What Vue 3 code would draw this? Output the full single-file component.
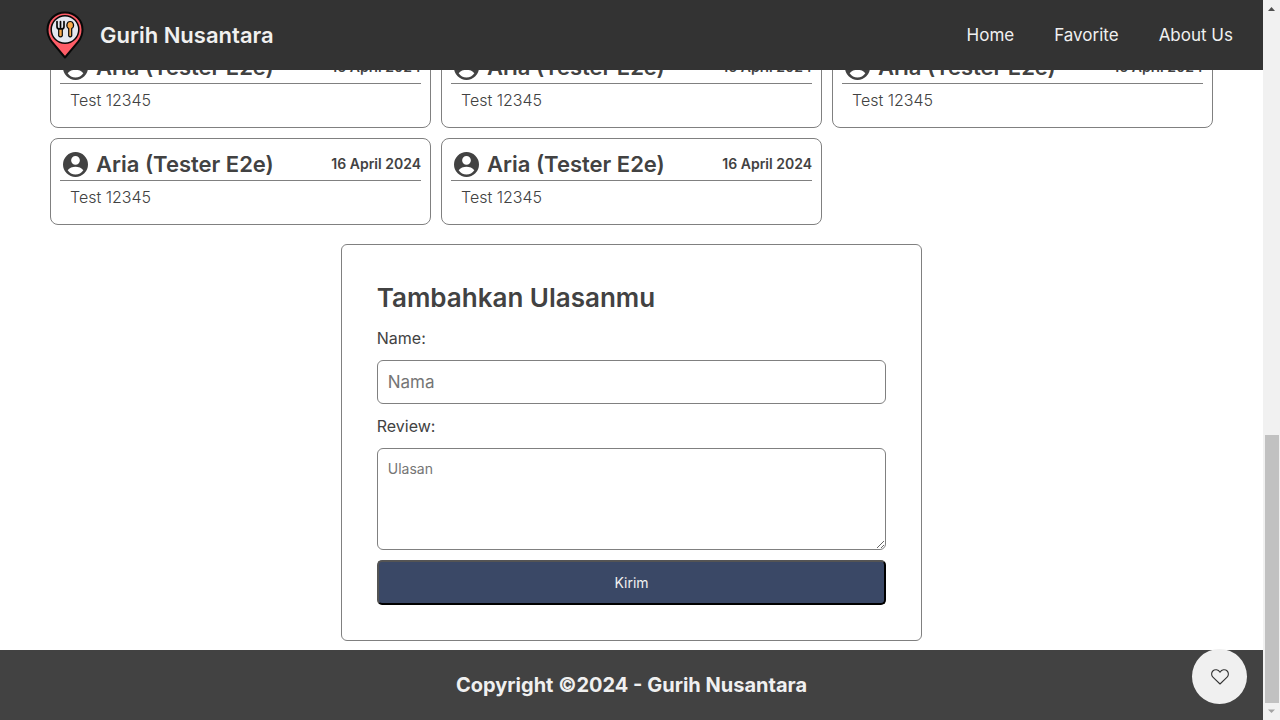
<script setup>
import { ref } from 'vue'

const links = ['Home', 'Favorite', 'About Us']
const reviews = Array.from({ length: 5 }, (_, id) => ({
  id,
  name: 'Aria (Tester E2e)',
  date: '16 April 2024',
  text: 'Test 12345',
}))
const name = ref('')
const review = ref('')
</script>

<template>
  <div class="window">
    <div class="page">
      <header class="topbar">
        <a class="brand" href="#">
          <svg class="logo" viewBox="0 0 40 48" aria-hidden="true">
            <path d="M20 1.500C10 1.500 2.500 9.200 2.500 18.700c0 5 1.800 8.900 4.600 12.500L20 46.500l12.900-15.300c2.800-3.600 4.600-7.500 4.600-12.500C37.500 9.200 30 1.500 20 1.500z" fill="#ff5d67" stroke="#080808" stroke-width="2" stroke-linejoin="round" />
            <circle cx="20" cy="18.500" r="13.800" fill="#e4e7ef" stroke="#080808" stroke-width="1.500" />
            <path d="M13.700 17.500h3.600v7.300q-1.800 2-3.600 0z" fill="#f8a94b" stroke="#080808" stroke-width="1.200" stroke-linejoin="round" />
            <path d="M12 10.500v5q0 2.500 2.500 2.500h2q2.500 0 2.500-2.500v-5M15.500 10.500v7" fill="none" stroke="#080808" stroke-width="1.700" stroke-linecap="round" />
            <path d="M23.700 17.500v7.300q1.500 2 3 0v-7.300c3-1.500 2.200-7-1.500-7s-4.500 5.500-1.500 7z" fill="#f8a94b" stroke="#080808" stroke-width="1.200" stroke-linejoin="round" />
          </svg>
          <span>Gurih Nusantara</span>
        </a>
        <nav class="links">
          <a v-for="link in links" :key="link" href="#">{{ link }}</a>
        </nav>
      </header>

      <main class="content">
        <section class="reviews">
          <article v-for="item in reviews" :key="item.id" class="review">
            <div class="review-head">
              <svg class="avatar" viewBox="0 0 24 24" aria-hidden="true">
                <path fill="currentColor" fill-rule="evenodd" d="M12 0a12 12 0 1 0 0 24a12 12 0 1 0 0-24zM12 3.800a4.200 4.200 0 1 1 0 8.400a4.200 4.200 0 1 1 0-8.400zM12 21.600c-3 0-5.900-1.500-7.500-4.200c1.500-2.200 4.700-3.300 7.500-3.300s6 1.100 7.500 3.300c-1.600 2.700-4.500 4.200-7.500 4.200z" />
              </svg>
              <h3>{{ item.name }}</h3>
              <span class="date">{{ item.date }}</span>
            </div>
            <p>{{ item.text }}</p>
          </article>
        </section>

        <form class="form" @submit.prevent>
          <h2>Tambahkan Ulasanmu</h2>
          <label for="name">Name:</label>
          <input id="name" v-model="name" type="text" placeholder="Nama" />
          <label for="review">Review:</label>
          <textarea id="review" v-model="review" placeholder="Ulasan"></textarea>
          <button type="submit">Kirim</button>
        </form>
      </main>

      <footer class="footer">Copyright ©2024 - Gurih Nusantara</footer>

      <button class="like" type="button" aria-label="Favorite">
        <svg viewBox="0 0 18 16" aria-hidden="true">
          <path d="M9 15L1.900 8.200C.2 6.500.2 3.600 1.800 2C3.800 0 7.300.4 9 3.200C10.700.4 14.200 0 16.200 2c1.600 1.600 1.600 4.500-.1 6.200z" fill="none" stroke="currentColor" stroke-width="1.100" stroke-linejoin="round" />
        </svg>
      </button>
    </div>

    <div class="scrollbar" aria-hidden="true">
      <svg class="arrow" viewBox="0 0 17 17"><path d="M5 11L8.500 7L12 11z" fill="#505050" /></svg>
      <div class="thumb"></div>
      <svg class="arrow" viewBox="0 0 17 17"><path d="M5 6.500h7L8.500 10z" fill="#a3a3a3" /></svg>
    </div>
  </div>
</template>

<style>
body {
  margin: 0;
}
</style>

<style scoped>
.window {
  display: flex;
  height: 100vh;
  overflow: hidden;
  font-family: Inter, "Open Sans", sans-serif;
  font-size: 16px;
  line-height: 24px;
  color: #424242;
  background: #fff;
}
.window *,
.window *::before {
  box-sizing: border-box;
}
.page {
  position: relative;
  display: flex;
  flex: 1;
  flex-direction: column;
  min-width: 0;
}
.topbar {
  position: sticky;
  top: 0;
  z-index: 2;
  display: flex;
  flex-shrink: 0;
  align-items: center;
  justify-content: space-between;
  height: 70px;
  margin-bottom: -29px;
  padding: 0 30px 0 45px;
  background: #333;
}
.brand {
  display: flex;
  align-items: center;
  gap: 15px;
  color: #f0f0f0;
  font-size: 22px;
  font-weight: 600;
  text-decoration: none;
}
.logo {
  width: 40px;
  height: 48px;
}
.links {
  display: flex;
  gap: 40px;
  font-size: 17px;
}
.links a {
  color: #f0f0f0;
  text-decoration: none;
}
.content {
  flex: 1;
  padding: 0 50px;
}
.reviews {
  display: grid;
  grid-template-columns: repeat(3, 1fr);
  gap: 10px;
}
.review {
  padding: 9px 9px 15px;
  border: 1px solid #808080;
  border-radius: 8px;
}
.review-head {
  display: flex;
  align-items: center;
  gap: 8px;
  height: 33px;
  padding-left: 3px;
  border-bottom: 1px solid #808080;
}
.avatar {
  width: 25px;
  height: 25px;
}
.review h3 {
  margin: 0;
  font-size: 22px;
  font-weight: 600;
}
.date {
  margin-left: auto;
  font-size: 14px;
  font-weight: 600;
}
.review p {
  margin: 4px 10px 0;
  font-weight: 300;
}
.form {
  display: flex;
  flex-direction: column;
  gap: 10px;
  width: 50%;
  margin: 19px auto 0;
  padding: 35px;
  border: 1px solid #808080;
  border-radius: 6px;
}
.form h2 {
  margin: 0;
  font-size: 26px;
  font-weight: 600;
  line-height: 36px;
}
.form input,
.form textarea {
  padding: 10px;
  border: 1px solid #808080;
  border-radius: 6px;
  outline: none;
  background: #fff;
  font-family: inherit;
}
.form input {
  height: 44px;
  font-size: 17px;
}
.form textarea {
  height: 102px;
  font-size: 14px;
  line-height: 20px;
  resize: vertical;
}
.form input::placeholder,
.form textarea::placeholder {
  color: #757575;
}
.form button {
  height: 45px;
  border: 2px outset #000;
  border-radius: 5px;
  background: #3a4866;
  color: #f0f0f0;
  font-family: inherit;
  font-size: 14px;
}
.footer {
  display: flex;
  flex-shrink: 0;
  align-items: center;
  justify-content: center;
  height: 70px;
  background: #424242;
  color: #f0f0f0;
  font-size: 20px;
  font-weight: 700;
}
.like {
  position: absolute;
  right: 16px;
  bottom: 16px;
  display: flex;
  align-items: center;
  justify-content: center;
  width: 55px;
  height: 55px;
  padding: 0;
  border: 0;
  border-radius: 50%;
  background: #f0f0f0;
  color: #333;
}
.like svg {
  width: 18px;
  height: 16px;
}
.scrollbar {
  display: flex;
  flex-direction: column;
  width: 17px;
  background: #f1f1f1;
}
.arrow {
  width: 17px;
  height: 17px;
}
.thumb {
  height: 268px;
  margin: auto 1px 0 2px;
  background: #c1c1c1;
}
</style>
